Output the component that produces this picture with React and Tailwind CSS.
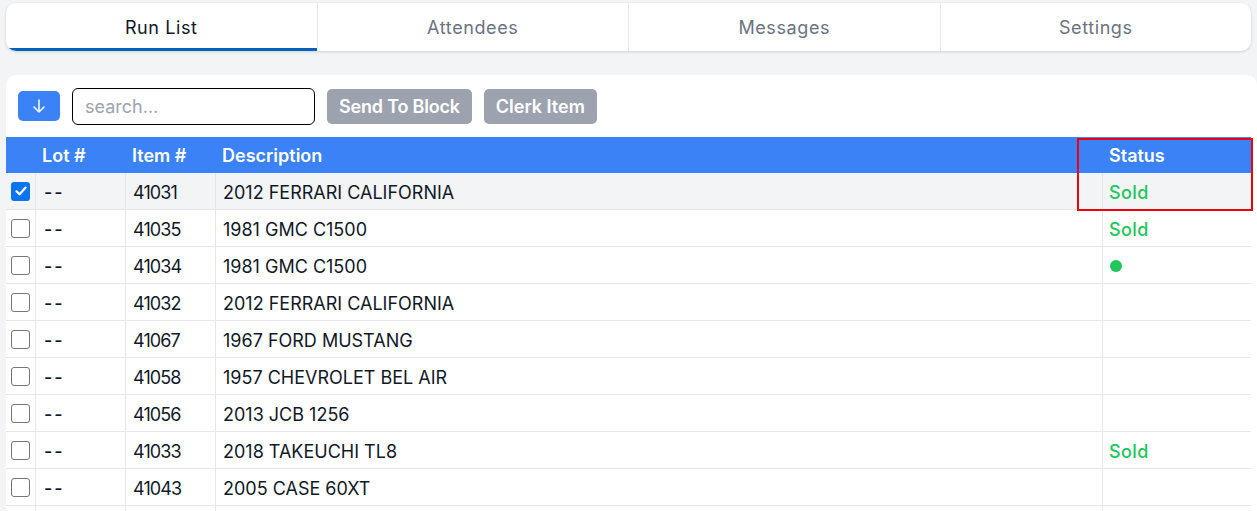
import React from "react";

const rows = [
  { item: "41031", desc: "2012 FERRARI CALIFORNIA", status: "Sold", checked: true },
  { item: "41035", desc: "1981 GMC C1500", status: "Sold" },
  { item: "41034", desc: "1981 GMC C1500", status: "dot" },
  { item: "41032", desc: "2012 FERRARI CALIFORNIA" },
  { item: "41067", desc: "1967 FORD MUSTANG" },
  { item: "41058", desc: "1957 CHEVROLET BEL AIR" },
  { item: "41056", desc: "2013 JCB 1256" },
  { item: "41033", desc: "2018 TAKEUCHI TL8", status: "Sold" },
  { item: "41043", desc: "2005 CASE 60XT" },
  { blank: true },
];

function Check({ checked }) {
  if (checked) {
    return (
      <div className="w-[19px] h-[19px] rounded-[3px] bg-[#0b75f0] flex items-center justify-center">
        <svg width="14" height="14" viewBox="0 0 14 14" fill="none">
          <path d="M2.5 7.3 L5.6 10.3 L11.6 3.6" stroke="white" strokeWidth="2.2" strokeLinecap="round" strokeLinejoin="round" />
        </svg>
      </div>
    );
  }
  return <div className="w-[19px] h-[19px] rounded-[3px] border-[1.5px] border-[#767676] bg-white" />;
}

export default function App() {
  const font = { fontFamily: "Inter, 'Noto Sans', sans-serif" };
  return (
    <div className="w-[1257px] h-[511px] overflow-hidden bg-[#f3f4f6] pt-[3px]" style={font}>
      <div className="mx-[6px] h-[48px] bg-white rounded-[10px] shadow-[0_1px_3px_rgba(0,0,0,0.15)] flex overflow-hidden">
        {["Run List", "Attendees", "Messages", "Settings"].map((t, i) => (
          <div
            key={t}
            className={
              "flex-1 flex items-center justify-center text-[18px] tracking-[0.6px] " +
              (i > 0 ? "border-l border-[#e5e7eb] " : "") +
              (i === 0 ? "text-[#111827] border-b-[3px] border-b-[#0062b8] pt-[4px]" : "text-[#6b7280] pt-[1px]")
            }
          >
            {t}
          </div>
        ))}
      </div>
      <div className="mt-[24px] ml-[6px] bg-white rounded-[10px] h-[500px]">
        <div className="flex items-center h-[62px] pl-[12px] gap-[12px]">
          <button className="w-[42px] h-[30px] rounded-[5px] bg-[#3b82f6] flex items-center justify-center">
            <svg width="16" height="16" viewBox="0 0 16 16" fill="none">
              <path d="M8 2 V14 M3 9 L8 14 L13 9" stroke="white" strokeWidth="1.5" strokeLinecap="round" strokeLinejoin="round" />
            </svg>
          </button>
          <div className="w-[243px] h-[37px] border border-black rounded-[6px] flex items-center px-[12px] text-[18px] text-[#9ca3af]">
            search…
          </div>
          <button className="h-[35px] px-[12px] rounded-[5px] bg-[#9ca3af] text-white text-[18px] font-semibold tracking-[-0.2px]">
            Send To Block
          </button>
          <button className="h-[35px] px-[12px] rounded-[5px] bg-[#9ca3af] text-white text-[18px] font-semibold">
            Clerk Item
          </button>
        </div>
        <div className="relative w-[1245px]">
          <div className="flex h-[36px] bg-[#3b82f6] text-white text-[18px] font-semibold items-center">
            <div className="w-[30px]" />
            <div className="w-[90px] pl-[6px]">Lot #</div>
            <div className="w-[90px] pl-[6px]">Item #</div>
            <div className="flex-1 pl-[6px]">Description</div>
            <div className="w-[148px] pl-[6px]">Status</div>
          </div>
          {rows.map((r, i) => (
            <div
              key={i}
              className={"flex h-[37px] border-b border-[#e5e7eb] text-[18px] text-[#111827] " + (r.checked ? "bg-[#f3f4f6]" : "bg-white")}
            >
              <div className="w-[30px] flex items-center justify-center border-r border-[#e5e7eb]">
                {!r.blank && <Check checked={r.checked} />}
              </div>
              <div className="w-[90px] pl-[8px] pt-[2px] flex items-center border-r border-[#e5e7eb] tracking-[2px] font-medium">{r.blank ? "" : "--"}</div>
              <div className="w-[90px] pl-[7px] pt-[2px] flex items-center border-r border-[#e5e7eb] tracking-[-0.9px]">{r.item}</div>
              <div className="flex-1 pl-[7px] pt-[2px] flex items-center border-r border-[#e5e7eb]">{r.desc}</div>
              <div className="w-[148px] pl-[6px] pt-[2px] flex items-center text-[#22c55e] font-medium tracking-[0.4px]">
                {r.status === "Sold" ? "Sold" : r.status === "dot" ? <span className="w-[12px] h-[12px] rounded-full bg-[#22c55e] ml-[1px]" /> : null}
              </div>
            </div>
          ))}
          <div className="absolute left-[1071px] top-[1px] w-[176px] h-[73px] border-2 border-[#e8000d] pointer-events-none" />
        </div>
      </div>
    </div>
  );
}
